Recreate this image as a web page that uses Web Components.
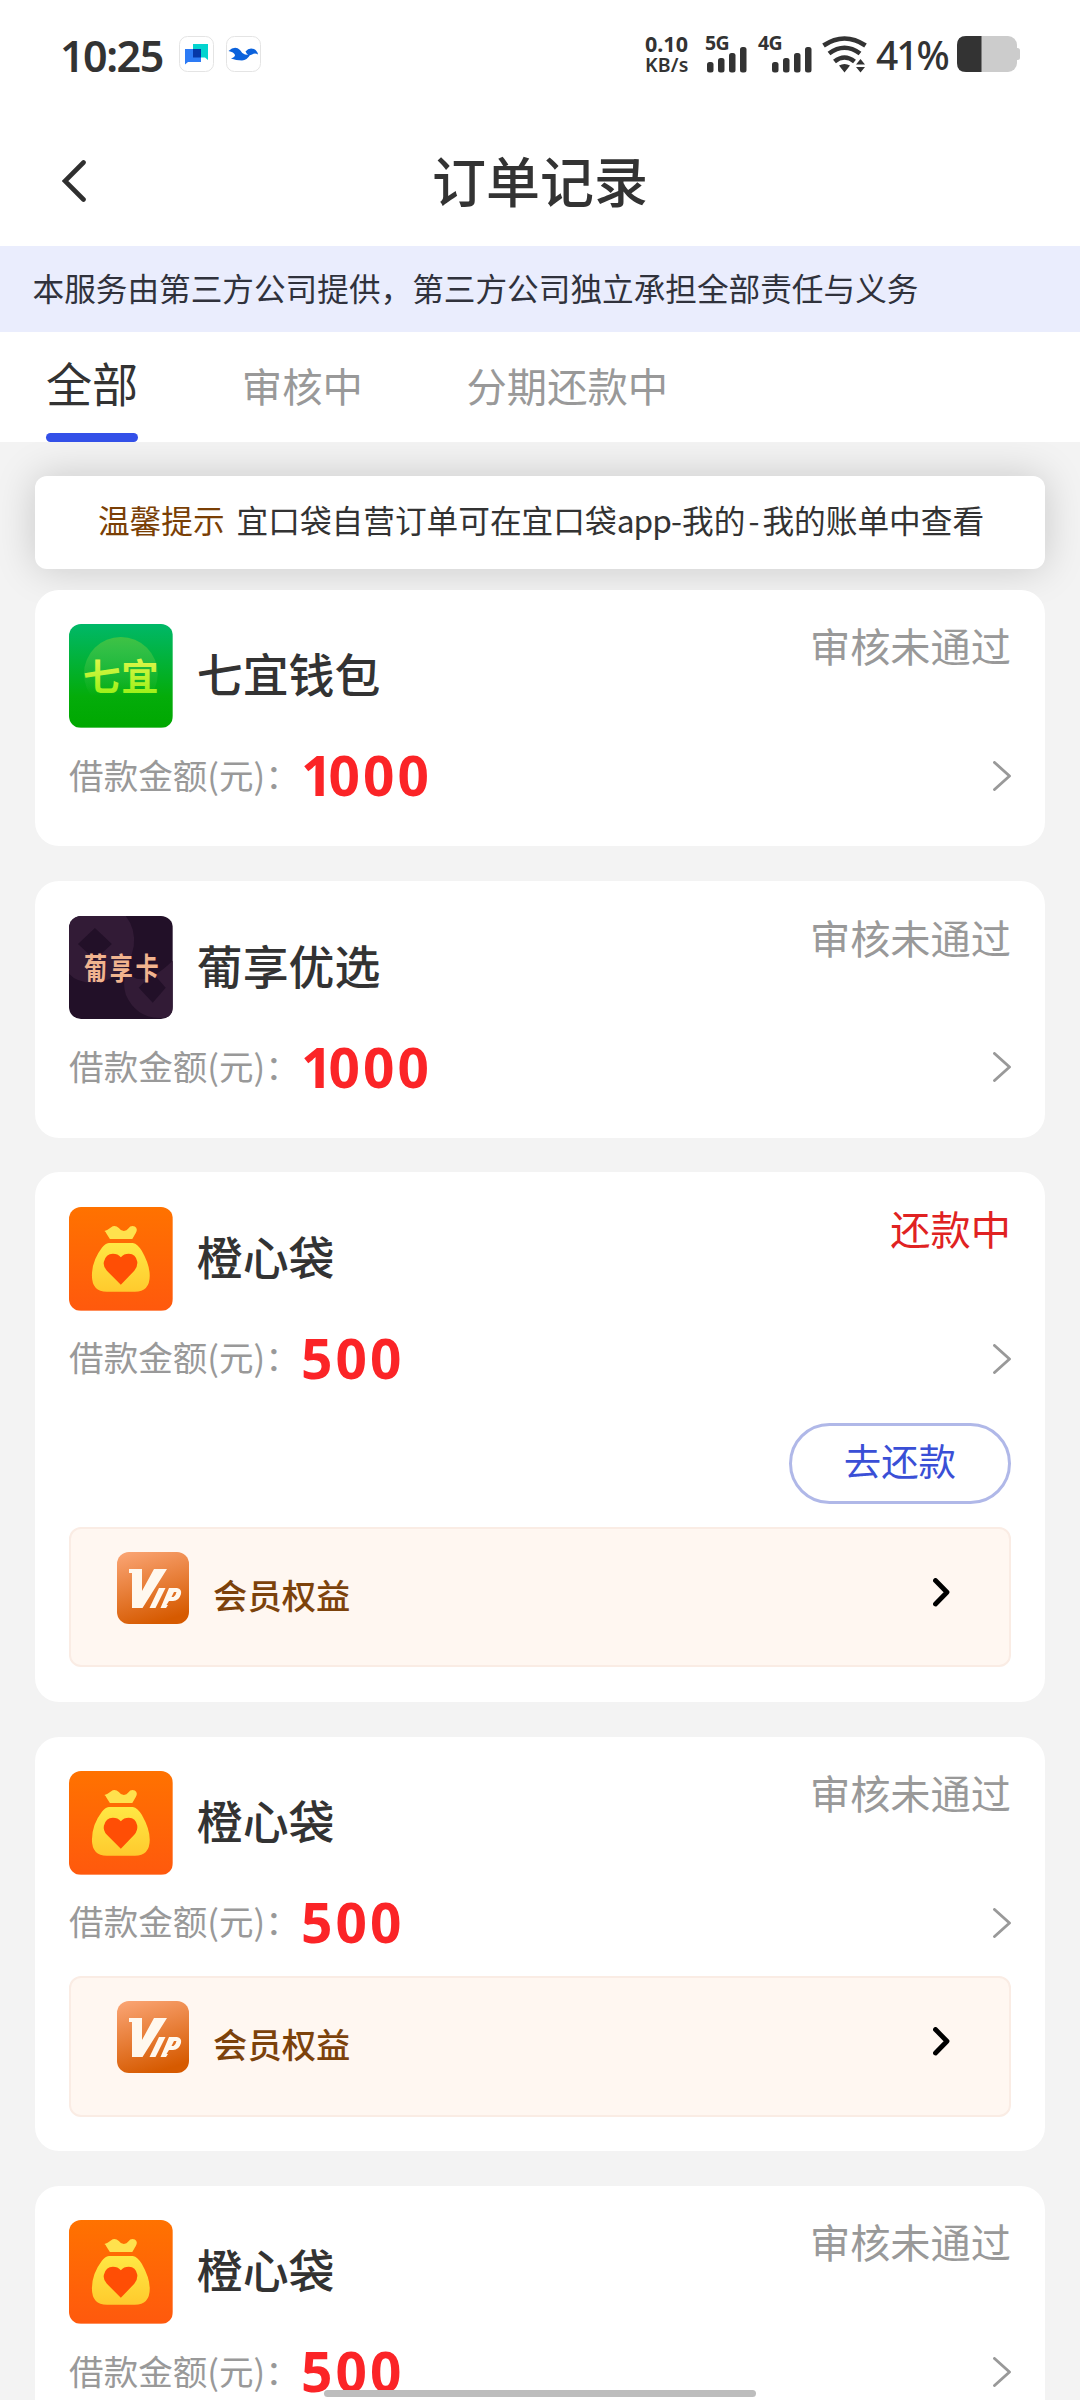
<!DOCTYPE html>
<html lang="zh-CN">
<head>
<meta charset="utf-8">
<title>订单记录</title>
<style>
html,body{margin:0;height:2400px;overflow:hidden;background:#f3f3f3}
body{font-family:"Noto Sans CJK SC","Noto Sans",sans-serif;color:#333}
</style>
</head>
<body>
<order-page></order-page>
<script>
const define = (name, html, setup) => customElements.define(name, class extends HTMLElement {
  connectedCallback() {
    if (this.shadowRoot) return;
    const root = this.attachShadow({mode: 'open'});
    root.innerHTML = typeof html === 'function' ? html(this) : html;
    if (setup) setup(this, root);
  }
});

define('status-bar', `
<style>
:host{display:flex;height:110px;box-sizing:border-box;padding:36px 60px 0 60px;align-items:flex-start;font-family:"Noto Sans",sans-serif;color:#333;background:#fff;line-height:1}
.time{font-size:43px;font-weight:600;letter-spacing:-1.5px;width:119px;margin-top:-2.500px;white-space:nowrap}
svg{display:block;flex:none}
.apps{display:flex;gap:12px}
.right{display:flex;margin-left:auto;align-items:flex-start}
.net{width:61px;font-weight:700;font-size:21.500px;line-height:21px;margin-top:-3px;white-space:nowrap}
.net div:last-child{font-size:19.500px;font-weight:600;letter-spacing:.2px}
.sig{position:relative;height:38px}
.sig b{position:absolute;left:-1px;top:-3px;font-size:19.500px;letter-spacing:-.6px;font-weight:700}
.pct{font-size:39px;font-weight:500;letter-spacing:-2px;width:81px;margin-top:-1.500px;white-space:nowrap}
</style>
<div class="time">10:25</div>
<div class="apps">
<svg width="35" height="37" viewBox="0 0 35 37"><rect x=".5" y=".5" width="34" height="35" rx="8" fill="#fff" stroke="#e4e4e4"/><path d="M14 8H29V24L26 21.500H14Z" fill="#04d4cf"/><path d="M6 13H22V26H9L6 28.500Z" fill="#2d7bf5"/><path d="M14 13H22V21.500H14Z" fill="#0638a8"/></svg>
<svg width="35" height="37" viewBox="0 0 35 37"><rect x=".5" y=".5" width="34" height="35" rx="8" fill="#fff" stroke="#e4e4e4"/><path d="M2.500 15Q9 9 14 14Q15.500 17 19 18.500L24 19Q21 24 16 24.500Q10 24.500 5 22.500Q9 21 9 19Q8 16 2.500 15ZM19.500 15.500Q23 11 28 13Q31.500 15 32 18.500Q29 16.500 26 18.500Q23 20 21 18Z" fill="#0b62dc"/></svg>
</div>
<div class="right">
<div class="net"><div>0.10</div><div>KB/s</div></div>
<div class="sig" style="width:52px"><b>5G</b><svg width="44" height="38"><g fill="#333"><rect x="1" y="26" width="6.500" height="10.500" rx="2.500"/><rect x="12" y="22" width="6.500" height="14.500" rx="2.500"/><rect x="23" y="17" width="6.500" height="19.500" rx="2.500"/><rect x="34" y="11" width="6.500" height="25.500" rx="2.500"/></g></svg></div>
<div class="sig" style="width:64px"><b style="left:0">4G</b><svg width="58" height="38"><g fill="#333"><rect x="14" y="26" width="6.500" height="10.500" rx="2.500"/><rect x="25" y="22" width="6.500" height="14.500" rx="2.500"/><rect x="36" y="17" width="6.500" height="19.500" rx="2.500"/><rect x="47" y="11" width="6.500" height="25.500" rx="2.500"/></g></svg></div>
<svg width="54" height="38" viewBox="0 0 54 38"><g fill="none" stroke="#333" stroke-width="4.600"><path d="M1.500 9.500Q22.500-4.500 43.500 9.500"/><path d="M7 17.500Q22.500 6 38 17.500"/><path d="M12.500 25.500Q22.500 17.500 32.500 25.500"/></g><path d="M17 29.500Q22.500 26.500 28 29.500L22.500 36.500ZM34 28.500L38.500 23 43 28.500ZM34 31H43L38.500 36.500Z" fill="#333"/></svg>
<div class="pct">41%</div>
<svg width="63" height="38" viewBox="0 0 63 38"><rect x="0" y="0" width="60" height="36" rx="9" fill="#ccc"/><path d="M59 12H60.500Q63 12 63 14.500V21.500Q63 24 60.500 24H59Z" fill="#ccc"/><path d="M24.500 0V36H9Q0 36 0 27V9Q0 0 9 0Z" fill="#333"/></svg>
</div>`);

define('nav-bar', `
<style>
:host{display:flex;height:136px;align-items:center;background:#fff}
.side{width:200px;height:42px;padding-left:61.500px;box-sizing:border-box;margin-top:6px}
h1{flex:1;margin:3px 0 0;text-align:center;font-size:54px;font-weight:500;line-height:70px}
svg{display:block}
</style>
<div class="side"><svg width="24" height="42" viewBox="0 0 24 42"><path d="M21.500 2.500L3 21L21.500 39.500" fill="none" stroke="#2f2f2f" stroke-width="4.600" stroke-linecap="round"/></svg></div>
<h1><slot></slot></h1><div class="side"></div>`);

define('notice-strip', `
<style>:host{display:flex;box-sizing:border-box;align-items:center;height:85.700px;padding:0 0 3px 32.500px;background:#eaedfd;color:#30323c;font-size:31.650px;line-height:1;white-space:nowrap}</style>
<slot></slot>`);

define('tab-bar', `
<style>:host{display:flex;position:relative;z-index:1;gap:103.700px;height:110.300px;padding-left:46px;background:#fff}</style><slot></slot>`);

define('tab-item', `
<style>
:host{display:flex;flex-direction:column;justify-content:space-between;font-size:40.320px;color:#999;white-space:nowrap}
:host([active]){font-size:46.080px;color:#333}
span{line-height:58px;margin-top:24px}
:host([active]) span{margin-top:21.500px}
i{display:none;height:9.300px;border-radius:5px;background:#3350e8}
:host([active]) i{display:block}
</style><span><slot></slot></span><i></i>`);

define('tip-card', `
<style>
:host{display:flex;box-sizing:border-box;align-items:center;justify-content:center;gap:12px;margin:34px 34.560px 0;height:93.300px;padding:0 0 5px 2px;border-radius:12px;background:#fff;box-shadow:0 0 40px rgba(0,0,0,.18);font-size:31.680px;line-height:1;white-space:nowrap;color:#333}
strong{font-weight:400;color:#7a3f05}
::slotted(.latin){letter-spacing:-.9px}
::slotted(.dash){margin:0 3px}
</style><strong><slot name="label"></slot></strong><span><slot></slot></span>`);

const logos = {
  qiyi: `<svg viewBox="0 0 104 104"><defs><linearGradient id="g" x2="0" y2="1"><stop stop-color="#00b868"/><stop offset=".7" stop-color="#04ac0a"/><stop offset="1" stop-color="#00a800"/></linearGradient><linearGradient id="c" x2="0" y2="1"><stop stop-color="#3fc244"/><stop offset=".8" stop-color="#3fc244" stop-opacity="0"/></linearGradient><linearGradient id="t" x2="0" y2="1"><stop stop-color="#f4f85a"/><stop offset="1" stop-color="#8cf00c"/></linearGradient></defs><rect width="104" height="104" fill="url(#g)"/><circle cx="52" cy="50" r="37" fill="url(#c)"/><text x="14" y="67" font-size="37.500" font-weight="700" textLength="76" fill="url(#t)">七宜</text></svg>`,
  puxiang: `<svg viewBox="0 0 104 104"><rect width="104" height="104" fill="#221028"/><g fill="#321b36"><path fill-rule="evenodd" d="M0 0H57Q67 13 65 30Q59 64 24 67Q8 67 0 58ZM26 12L9 28L26 44L43 28Z"/><path fill-rule="evenodd" d="M104 45V101Q70 108 57 79Q53 66 58 55Q72 76 104 45ZM84 57L70 72L84 87L97 72Z"/></g><text transform="translate(15 63) scale(.86 1.100)" x="0" y="0" font-size="27" font-weight="700" textLength="87" fill="#f1b48f">葡享卡</text></svg>`,
  bag: `<svg viewBox="0 0 104 104"><defs><linearGradient id="o" x2="0" y2="1"><stop stop-color="#ff7200"/><stop offset="1" stop-color="#ff590d"/></linearGradient><linearGradient id="y" x2="0" y2="1"><stop stop-color="#ffe844"/><stop offset="1" stop-color="#ffca2d"/></linearGradient></defs><rect width="104" height="104" fill="url(#o)"/><path d="M35.500 24Q39 23 42 20.500Q46 17.500 50 21Q52 24 55 24Q58 24 59.500 21.500Q62 18 66 19.500Q69.500 22 67 26L63.500 32H41L37.500 26.500Q37 25 35.500 24Z" fill="#ffe14d"/><path d="M40 36H64Q69 37 73 44Q81 58 81 69Q81 85 66 85H38Q23 85 23 69Q23 54 33 41Q36 36.500 40 36Z" fill="url(#y)"/><path d="M52 78L38 64Q34 60 35 55Q37 47 44 47Q49 47 52 50.500Q55 47 60 47Q67 47 68.500 55Q69 60 65.500 64Z" fill="#ff4e05"/></svg>`
};

define('app-logo', el => `
<style>:host{display:block;flex:none;width:103.680px;height:103.680px;border-radius:12px;overflow:hidden}svg{display:block;width:100%;height:100%}</style>${logos[el.getAttribute('name')]}`);

define('order-card', el => `
<style>
:host{display:block;margin:0 34.560px;padding:34.560px;border-radius:24px;background:#fff}
.head{display:flex;height:103.680px}
.name{flex:1;margin-left:24px;line-height:96px;font-size:45.900px;font-weight:500;color:#333}
.state{font-size:40.200px;line-height:42.500px;color:#999;white-space:nowrap}
:host([tone=repaying]) .state{color:#e02222}
.row{display:flex;align-items:center;margin-top:12px;height:72px}
.label{font-size:34.560px;line-height:1;color:#999;width:232px;padding-bottom:4px;white-space:nowrap}
.sum{font-family:"Noto Sans",sans-serif;font-weight:700;font-size:55px;line-height:1;letter-spacing:3px;color:#fb2427;flex:1;padding-bottom:2px}
.one{letter-spacing:-4px}
svg{display:block}
</style>
<div class="head"><app-logo name="${el.getAttribute('logo')}"></app-logo><div class="name">${el.getAttribute('name')}</div><div class="state">${el.getAttribute('state')}</div></div>
<div class="row"><div class="label">借款金额(元)：</div><div class="sum">${el.getAttribute('sum').replace(/^1/, '<span class="one">1</span>')}</div><svg width="18" height="30" viewBox="0 0 18 30"><path d="M1.500 1.500L16.500 15L1.500 28.500" fill="none" stroke="#999" stroke-width="2.900" stroke-linecap="round" stroke-linejoin="round"/></svg></div>
<slot></slot>`);

define('repay-button', `
<style>
:host{display:flex;justify-content:flex-end;margin-top:28.600px}
button{box-sizing:border-box;width:222px;height:81px;border:3px solid #b0b8e8;border-radius:41px;background:#fff;padding:0 0 5px;color:#3a4fd6;font:400 37.440px/1 "Noto Sans CJK SC",sans-serif}
</style><button><slot></slot></button>`);

define('vip-panel', `
<style>
:host{display:flex;box-sizing:border-box;height:140.300px;margin-top:17.600px;padding:23px 59px 0 46px;border:2px solid #faece4;border-radius:12px;background:#fff7f1}
:host([after-action]){margin-top:23px}
.t{flex:1;margin-left:24px;font-size:34.300px;font-weight:500;line-height:85px;color:#7c420b}
svg{display:block;flex:none}.a{margin-top:26px}
</style>
<svg width="72" height="72" viewBox="0 0 72 72"><defs><linearGradient id="v" x1=".2" x2=".5" y2="1"><stop stop-color="#f9a270"/><stop offset="1" stop-color="#d65a00"/></linearGradient></defs><rect width="72" height="72" rx="12" fill="url(#v)"/><g fill="#fff8ee"><path d="M12 17H25V39L37 17H50L25.500 56H15V21H12Z"/><path d="M42 36H48.500L38.500 56H32.500Z"/><path fill-rule="evenodd" d="M52 36H60Q65 37 64 42Q62 49 56 49H52L49.500 53H51L49 56H43.500ZM57 40L54.500 45H56.500Q59 43 59.500 40Z"/></g></svg>
<div class="t"><slot></slot></div>
<svg class="a" width="17" height="29" viewBox="0 0 17 29"><path d="M2.500 2.500L14 14.300L2.500 26" fill="none" stroke="#000" stroke-width="4.800" stroke-linecap="round" stroke-linejoin="round"/></svg>`);

define('home-indicator', `<style>:host{position:absolute;left:324px;top:2389.500px;width:432px;height:7px;border-radius:4px;background:#bdbdbd}</style>`);

define('order-page', `
<style>
:host{display:block;position:relative;width:1080px;height:2400px;overflow:hidden;background:#f3f3f3}
.list{display:flex;flex-direction:column;gap:34.560px;margin-top:20.400px}
</style>
<status-bar></status-bar>
<nav-bar>订单记录</nav-bar>
<notice-strip>本服务由第三方公司提供，第三方公司独立承担全部责任与义务</notice-strip>
<tab-bar><tab-item active>全部</tab-item><tab-item>审核中</tab-item><tab-item>分期还款中</tab-item></tab-bar>
<tip-card><span slot="label">温馨提示</span>宜口袋自营订单可在宜口袋<span class="latin">app</span>-我的<span class="dash">-</span>我的账单中查看</tip-card>
<div class="list">
<order-card logo="qiyi" name="七宜钱包" state="审核未通过" sum="1000"></order-card>
<order-card logo="puxiang" name="葡享优选" state="审核未通过" sum="1000"></order-card>
<order-card logo="bag" name="橙心袋" state="还款中" sum="500" tone="repaying"><repay-button>去还款</repay-button><vip-panel after-action>会员权益</vip-panel></order-card>
<order-card logo="bag" name="橙心袋" state="审核未通过" sum="500"><vip-panel>会员权益</vip-panel></order-card>
<order-card logo="bag" name="橙心袋" state="审核未通过" sum="500"></order-card>
</div>
<home-indicator></home-indicator>`);
</script>
</body>
</html>
